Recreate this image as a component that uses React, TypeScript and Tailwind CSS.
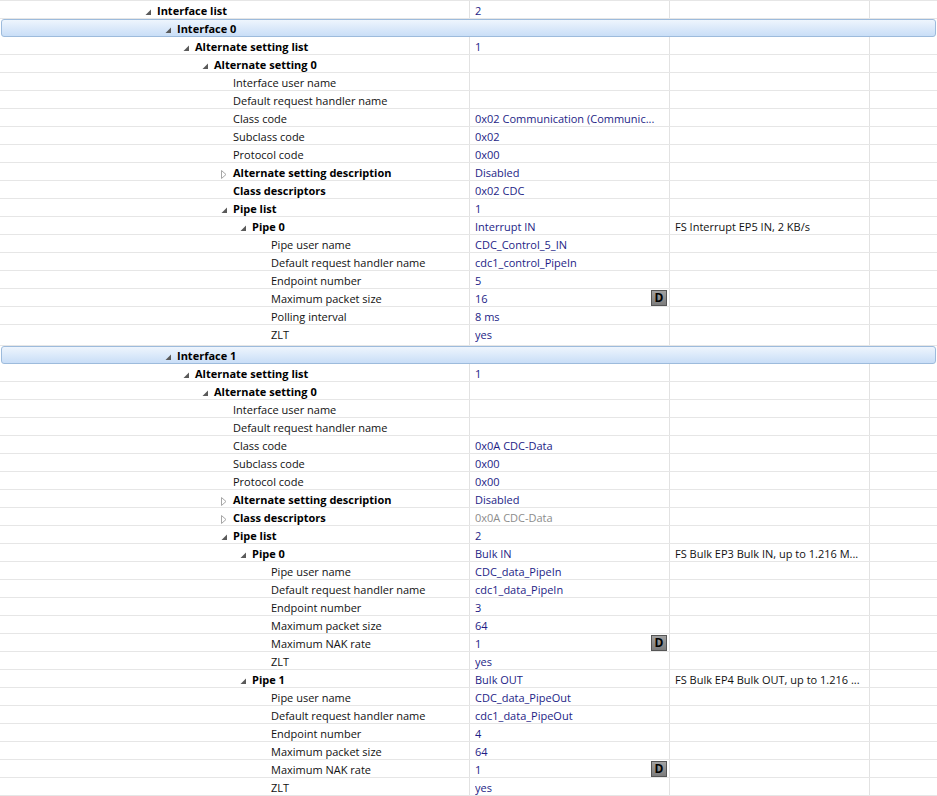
type Row = {
  level: number
  label: string
  bold?: boolean
  toggle?: 'open' | 'closed'
  value?: string
  muted?: boolean
  info?: string
  d?: boolean
  selected?: boolean
  tall?: boolean
}

const rows: Row[] = [
  { level: 0, label: 'Interface list', bold: true, toggle: 'open', value: '2' },
  { level: 1, label: 'Interface 0', bold: true, toggle: 'open', selected: true },
  { level: 2, label: 'Alternate setting list', bold: true, toggle: 'open', value: '1' },
  { level: 3, label: 'Alternate setting 0', bold: true, toggle: 'open' },
  { level: 4, label: 'Interface user name' },
  { level: 4, label: 'Default request handler name' },
  { level: 4, label: 'Class code', value: '0x02 Communication (Communic...' },
  { level: 4, label: 'Subclass code', value: '0x02' },
  { level: 4, label: 'Protocol code', value: '0x00' },
  { level: 4, label: 'Alternate setting description', bold: true, toggle: 'closed', value: 'Disabled' },
  { level: 4, label: 'Class descriptors', bold: true, value: '0x02 CDC' },
  { level: 4, label: 'Pipe list', bold: true, toggle: 'open', value: '1' },
  { level: 5, label: 'Pipe 0', bold: true, toggle: 'open', value: 'Interrupt IN', info: 'FS Interrupt EP5 IN, 2 KB/s' },
  { level: 6, label: 'Pipe user name', value: 'CDC_Control_5_IN' },
  { level: 6, label: 'Default request handler name', value: 'cdc1_control_PipeIn' },
  { level: 6, label: 'Endpoint number', value: '5' },
  { level: 6, label: 'Maximum packet size', value: '16', d: true },
  { level: 6, label: 'Polling interval', value: '8 ms' },
  { level: 6, label: 'ZLT', value: 'yes', tall: true },
  { level: 1, label: 'Interface 1', bold: true, toggle: 'open', selected: true },
  { level: 2, label: 'Alternate setting list', bold: true, toggle: 'open', value: '1' },
  { level: 3, label: 'Alternate setting 0', bold: true, toggle: 'open' },
  { level: 4, label: 'Interface user name' },
  { level: 4, label: 'Default request handler name' },
  { level: 4, label: 'Class code', value: '0x0A CDC-Data' },
  { level: 4, label: 'Subclass code', value: '0x00' },
  { level: 4, label: 'Protocol code', value: '0x00' },
  { level: 4, label: 'Alternate setting description', bold: true, toggle: 'closed', value: 'Disabled' },
  { level: 4, label: 'Class descriptors', bold: true, toggle: 'closed', value: '0x0A CDC-Data', muted: true },
  { level: 4, label: 'Pipe list', bold: true, toggle: 'open', value: '2' },
  { level: 5, label: 'Pipe 0', bold: true, toggle: 'open', value: 'Bulk IN', info: 'FS Bulk EP3 Bulk IN, up to 1.216 M...' },
  { level: 6, label: 'Pipe user name', value: 'CDC_data_PipeIn' },
  { level: 6, label: 'Default request handler name', value: 'cdc1_data_PipeIn' },
  { level: 6, label: 'Endpoint number', value: '3' },
  { level: 6, label: 'Maximum packet size', value: '64' },
  { level: 6, label: 'Maximum NAK rate', value: '1', d: true },
  { level: 6, label: 'ZLT', value: 'yes' },
  { level: 5, label: 'Pipe 1', bold: true, toggle: 'open', value: 'Bulk OUT', info: 'FS Bulk EP4 Bulk OUT, up to 1.216 ...' },
  { level: 6, label: 'Pipe user name', value: 'CDC_data_PipeOut' },
  { level: 6, label: 'Default request handler name', value: 'cdc1_data_PipeOut' },
  { level: 6, label: 'Endpoint number', value: '4' },
  { level: 6, label: 'Maximum packet size', value: '64' },
  { level: 6, label: 'Maximum NAK rate', value: '1', d: true },
  { level: 6, label: 'ZLT', value: 'yes' },
]

const Toggle = ({ kind }: { kind?: 'open' | 'closed' }) => {
  if (kind === 'open')
    return (
      <svg width="7" height="7" viewBox="0 0 7 7" className="mt-[3px]">
        <polygon points="6,0.5 6,6 0.5,6" fill="#5a5a5a" />
      </svg>
    )
  if (kind === 'closed')
    return (
      <svg width="6" height="9" viewBox="0 0 6 9" className="mt-[3px]">
        <polygon points="0.5,0.5 5,4.5 0.5,8.5" fill="none" stroke="#a6a6a6" />
      </svg>
    )
  return null
}

const TreeRow = ({ row }: { row: Row }) => {
  const labelCell = (
    <div className="flex items-center h-[18px] pt-[1px]" style={{ paddingLeft: 145 + row.level * 19 }}>
      <span className="w-[12px] flex items-center">
        <Toggle kind={row.toggle} />
      </span>
      <span className={row.bold ? 'font-bold text-black' : 'text-[#111]'}>{row.label}</span>
    </div>
  )

  if (row.selected) {
    return (
      <div className="h-[18px] mx-[1px] border border-[#9dbbdc] rounded-[3px] bg-gradient-to-b from-[#eef5fd] to-[#c9def7] flex items-center">
        <div className="w-[469px] -ml-[1px]">{labelCell}</div>
      </div>
    )
  }

  return (
    <div
      className={`flex items-start border-b border-[#e6e6e6] ${row.tall ? 'h-[21px]' : 'h-[18px]'}`}
    >
      <div className="w-[470px] h-full border-r border-[#e2e2e2]">{labelCell}</div>
      <div className="w-[200px] h-full border-r border-[#e2e2e2] flex items-start pl-[5px] pr-[2px]">
        <span className={`flex-1 pt-[1px] leading-[18px] whitespace-nowrap overflow-hidden ${row.muted ? 'text-[#8c8c8c]' : 'text-[#1d1d86]'}`}>
          {row.value}
        </span>
        {row.d && (
          <span className="mt-[1px] w-[16px] h-[16px] flex items-center justify-center bg-gradient-to-b from-[#a2a2a2] to-[#7c7c7c] border border-[#555] text-black font-bold text-[12px] leading-none">
            D
          </span>
        )}
      </div>
      <div className="w-[200px] h-full border-r border-[#e2e2e2] pl-[5px] pt-[1px] leading-[18px] whitespace-nowrap overflow-hidden text-[#111]">
        {row.info}
      </div>
      <div className="flex-1 h-full" />
    </div>
  )
}

export default function App() {
  return (
    <div className="w-[937px] h-[796px] overflow-hidden bg-white border-t border-[#e6e6e6] font-['Open_Sans',sans-serif] text-[11px] leading-[18px]">
      {rows.map((row, i) => (
        <TreeRow key={i} row={row} />
      ))}
    </div>
  )
}
